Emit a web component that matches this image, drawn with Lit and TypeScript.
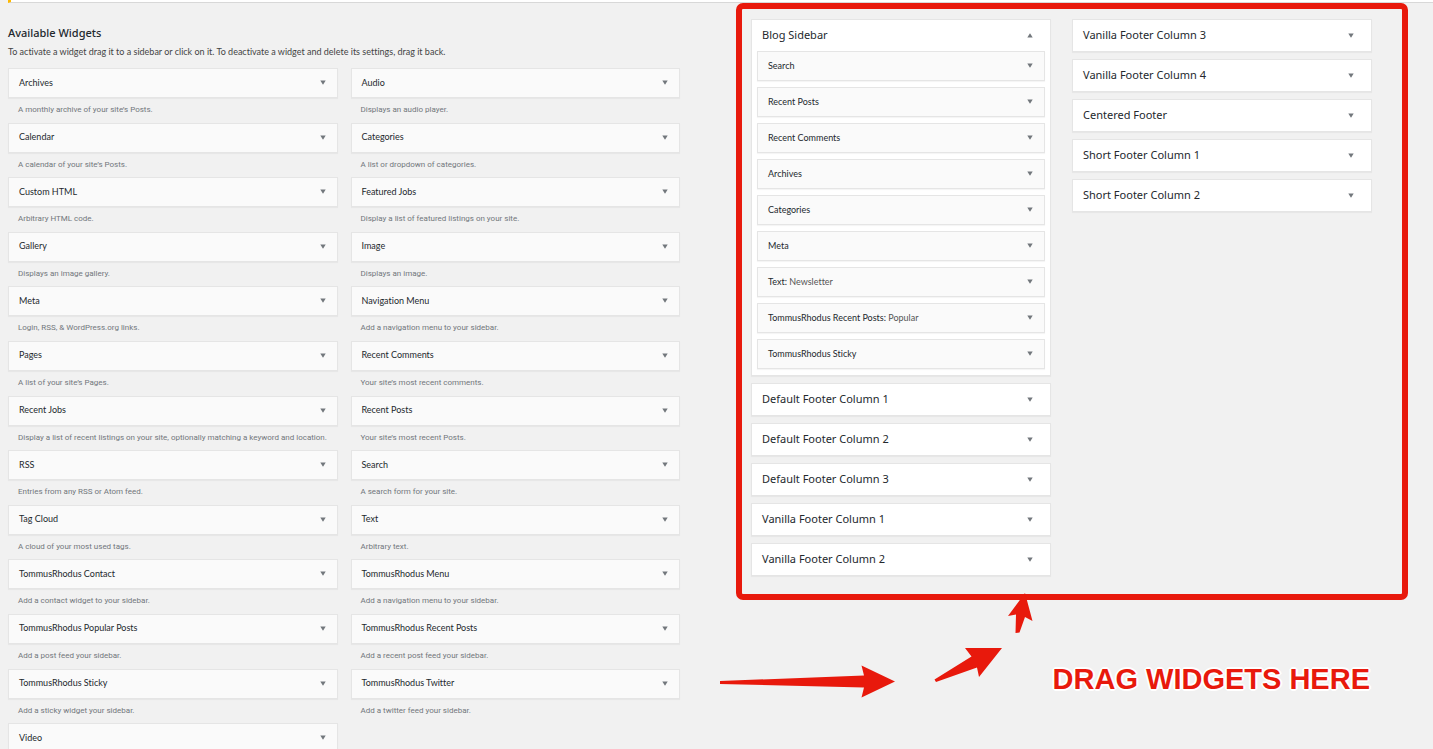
import { LitElement, html, css, svg, nothing } from "lit";
import { customElement, property } from "lit/decorators.js";

interface Widget {
  title: string;
  detail?: string;
}

const AVAILABLE: Widget[] = [
  { title: "Archives", detail: "A monthly archive of your site’s Posts." },
  { title: "Audio", detail: "Displays an audio player." },
  { title: "Calendar", detail: "A calendar of your site’s Posts." },
  { title: "Categories", detail: "A list or dropdown of categories." },
  { title: "Custom HTML", detail: "Arbitrary HTML code." },
  { title: "Featured Jobs", detail: "Display a list of featured listings on your site." },
  { title: "Gallery", detail: "Displays an image gallery." },
  { title: "Image", detail: "Displays an image." },
  { title: "Meta", detail: "Login, RSS, & WordPress.org links." },
  { title: "Navigation Menu", detail: "Add a navigation menu to your sidebar." },
  { title: "Pages", detail: "A list of your site’s Pages." },
  { title: "Recent Comments", detail: "Your site’s most recent comments." },
  { title: "Recent Jobs", detail: "Display a list of recent listings on your site, optionally matching a keyword and location." },
  { title: "Recent Posts", detail: "Your site’s most recent Posts." },
  { title: "RSS", detail: "Entries from any RSS or Atom feed." },
  { title: "Search", detail: "A search form for your site." },
  { title: "Tag Cloud", detail: "A cloud of your most used tags." },
  { title: "Text", detail: "Arbitrary text." },
  { title: "TommusRhodus Contact", detail: "Add a contact widget to your sidebar." },
  { title: "TommusRhodus Menu", detail: "Add a navigation menu to your sidebar." },
  { title: "TommusRhodus Popular Posts", detail: "Add a post feed your sidebar." },
  { title: "TommusRhodus Recent Posts", detail: "Add a recent post feed your sidebar." },
  { title: "TommusRhodus Sticky", detail: "Add a sticky widget your sidebar." },
  { title: "TommusRhodus Twitter", detail: "Add a twitter feed your sidebar." },
  { title: "Video" },
];

const BLOG_SIDEBAR: { title: string; name?: string }[] = [
  { title: "Search" },
  { title: "Recent Posts" },
  { title: "Recent Comments" },
  { title: "Archives" },
  { title: "Categories" },
  { title: "Meta" },
  { title: "Text", name: "Newsletter" },
  { title: "TommusRhodus Recent Posts", name: "Popular" },
  { title: "TommusRhodus Sticky" },
];

const FIRST_AREAS = [
  "Default Footer Column 1",
  "Default Footer Column 2",
  "Default Footer Column 3",
  "Vanilla Footer Column 1",
  "Vanilla Footer Column 2",
];

const SECOND_AREAS = [
  "Vanilla Footer Column 3",
  "Vanilla Footer Column 4",
  "Centered Footer",
  "Short Footer Column 1",
  "Short Footer Column 2",
];

const caret = (up: boolean) => html`
  <svg width="6" height="5" viewBox="0 0 6 5" aria-hidden="true">
    ${up ? svg`<path d="M0.3 4.5 L3 0.3 L5.7 4.5 Z" />` : svg`<path d="M0.3 0.5 H5.7 L3 4.7 Z" />`}
  </svg>
`;

/** A widget bar: title, optional instance name, and a toggle. */
@customElement("widget-bar")
export class WidgetBar extends LitElement {
  @property() heading = "";
  @property() name = "";

  static styles = css`
    :host {
      display: block;
    }
    .bar {
      box-sizing: border-box;
      height: 30px;
      display: flex;
      align-items: center;
      justify-content: space-between;
      padding: 0 11px 1px 10px;
      background: #fafafa;
      border: 1px solid #e5e5e5;
      box-shadow: 0 1px 1px rgba(0, 0, 0, 0.04);
    }
    .title {
      margin: 0;
      font-family: Lato, "Segoe UI", sans-serif;
      font-size: 9px;
      line-height: 14px;
      font-weight: 400;
      color: #23282d;
      white-space: nowrap;
    }
    .name {
      color: #555;
    }
    .toggle {
      display: flex;
      padding: 4px 0;
      border: 0;
      background: none;
      fill: #72777c;
      cursor: pointer;
    }
  `;

  render() {
    return html`
      <div class="bar">
        <h3 class="title">
          ${this.heading}${this.name ? html`: <span class="name">${this.name}</span>` : nothing}
        </h3>
        <button class="toggle" aria-label="Edit widget: ${this.heading}">${caret(false)}</button>
      </div>
    `;
  }
}

/** A sidebar area that holds widget bars while it is open. */
@customElement("sidebar-area")
export class SidebarArea extends LitElement {
  @property() heading = "";
  @property({ type: Boolean }) open = false;

  static styles = css`
    :host {
      display: block;
    }
    .area {
      background: #fff;
      border: 1px solid #e5e5e5;
      box-shadow: 0 1px 1px rgba(0, 0, 0, 0.04);
    }
    .head {
      display: flex;
      align-items: center;
      justify-content: space-between;
      box-sizing: border-box;
      height: 31px;
      padding: 0 17px 1px 10px;
    }
    .title {
      margin: 0;
      font-size: 11px;
      line-height: 16px;
      font-weight: 400;
      color: #23282d;
    }
    .toggle {
      display: flex;
      padding: 4px 0;
      border: 0;
      background: none;
      fill: #72777c;
      cursor: pointer;
    }
    .body {
      display: flex;
      flex-direction: column;
      gap: 6px;
      padding: 0 5px 6px;
    }
  `;

  render() {
    return html`
      <section class="area">
        <header class="head">
          <h2 class="title">${this.heading}</h2>
          <button
            class="toggle"
            aria-label=${this.heading}
            aria-expanded=${this.open ? "true" : "false"}
            @click=${() => (this.open = !this.open)}
          >
            ${caret(this.open)}
          </button>
        </header>
        ${this.open ? html`<div class="body"><slot></slot></div>` : nothing}
      </section>
    `;
  }
}

@customElement("app-root")
export class AppRoot extends LitElement {
  static styles = css`
    :host {
      display: block;
      min-height: 100vh;
      background: #f1f1f1;
      color: #444;
      font-family: "Segoe UI", "Noto Sans", "Open Sans", sans-serif;
      font-variant-ligatures: none;
    }
    .notice {
      box-sizing: border-box;
      height: 3px;
      margin-left: 8px;
      background: #fff;
      border-left: 3px solid #ffb900;
      border-bottom: 1px solid #d8d8d8;
    }
    .page {
      display: grid;
      grid-template-columns: minmax(0, 1fr) minmax(0, 1fr);
      column-gap: 56px;
      align-items: start;
      padding: 0 25px 0 8px;
    }
    .available {
      padding-top: 22px;
    }
    .heading {
      margin: 0;
      font-size: 11px;
      line-height: 16px;
      font-weight: 500;
      color: #23282d;
    }
    .intro {
      margin: 4px 0 9px;
      font-family: Lato, "Segoe UI", sans-serif;
      font-size: 9px;
      line-height: 14px;
      color: #444;
    }
    .widgets {
      display: grid;
      grid-template-columns: minmax(0, 1fr) minmax(0, 1fr);
      column-gap: 13px;
      margin: 0;
      padding: 0;
      list-style: none;
    }
    .detail {
      margin: 0;
      padding: 6px 0 7px 10px;
      font-family: Roboto, "Segoe UI", sans-serif;
      font-size: 8px;
      line-height: 1.45;
      color: #72777c;
      white-space: nowrap;
    }
    .side {
      position: relative;
    }
    .frame {
      display: grid;
      grid-template-columns: minmax(0, 1fr) minmax(0, 1fr);
      column-gap: 21px;
      align-items: start;
      padding: 10px 30px 18px 9px;
      border: 6px solid #e8190c;
      border-radius: 7px;
    }
    .column {
      display: flex;
      flex-direction: column;
      gap: 7px;
    }
    .callout {
      margin: 62px 38px 0 0;
      text-align: right;
      font-family: "Liberation Sans", Arial, sans-serif;
      font-size: 29px;
      line-height: 34px;
      font-weight: 700;
      color: #e8190c;
      text-shadow: 1px 1px 0 #fff, -1px 1px 0 #fff, 1px -1px 0 #fff, -1px -1px 0 #fff,
        2px 0 0 #fff, -2px 0 0 #fff, 0 2px 0 #fff, 0 -2px 0 #fff;
    }
    .arrows {
      position: absolute;
      left: -16px;
      top: 587px;
      fill: #e8190c;
      pointer-events: none;
    }
  `;

  render() {
    return html`
      <div class="notice"></div>
      <main class="page">
        <section class="available">
          <h2 class="heading">Available Widgets</h2>
          <p class="intro">
            To activate a widget drag it to a sidebar or click on it. To deactivate a widget and
            delete its settings, drag it back.
          </p>
          <ul class="widgets">
            ${AVAILABLE.map(
              (w) => html`
                <li>
                  <widget-bar heading=${w.title}></widget-bar>
                  ${w.detail ? html`<p class="detail">${w.detail}</p>` : nothing}
                </li>
              `
            )}
          </ul>
        </section>

        <section class="side">
          <div class="frame">
            <div class="column">
              <sidebar-area heading="Blog Sidebar" open>
                ${BLOG_SIDEBAR.map(
                  (w) => html`<widget-bar heading=${w.title} name=${w.name ?? ""}></widget-bar>`
                )}
              </sidebar-area>
              ${FIRST_AREAS.map((a) => html`<sidebar-area heading=${a}></sidebar-area>`)}
            </div>
            <div class="column">
              ${SECOND_AREAS.map((a) => html`<sidebar-area heading=${a}></sidebar-area>`)}
            </div>
          </div>
          <p class="callout">DRAG WIDGETS HERE</p>
          <svg class="arrows" width="320" height="110" viewBox="0 0 320 110" aria-hidden="true">
            <path d="M0 91 L144 85.5 L141.500 75.500 L175 91.500 L141.500 107.500 L144 97.500 L0 94 Z" />
            <path d="M214.500 89.500 L251.500 66.500 L245 58 L282 58 L259 87 L257 77.500 L216 92 Z" />
            <path d="M295.500 43 L296 24.500 L288 26 L305 3 L312.500 31 L305 27 L299.500 42.500 Z" />
          </svg>
        </section>
      </main>
    `;
  }
}
